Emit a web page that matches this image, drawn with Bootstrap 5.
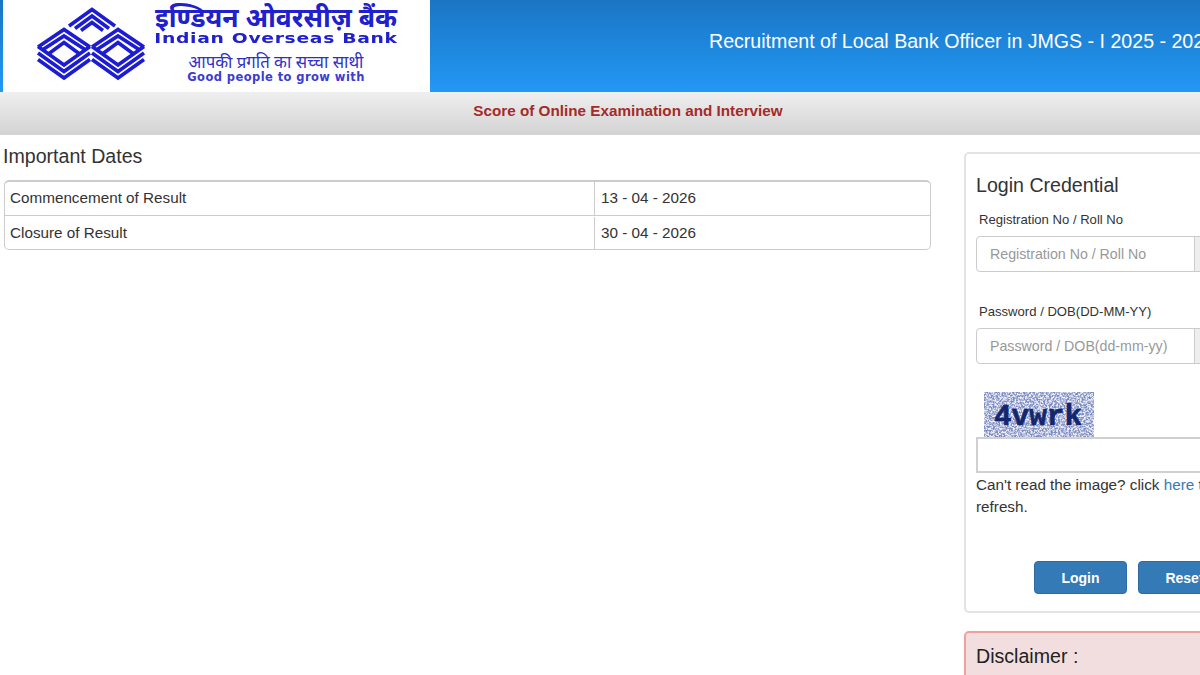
<!DOCTYPE html>
<html lang="en">
<head>
    <meta charset="UTF-8">
    <meta name="viewport" content="width=device-width, initial-scale=1.0">
    <title>Indian Overseas Bank</title>
    <link href="https://cdn.jsdelivr.net/npm/bootstrap@5.3.0/dist/css/bootstrap.min.css" rel="stylesheet">
    <style>
        html, body { height: 675px; overflow: hidden; }
        body { font-family: "Liberation Sans", Arial, sans-serif; font-size: 15.25px; color: #333; background: #fff; }
        .page-wrap { width: 1256px; }

        .top-head { height: 92px; padding-left: 3px; background: linear-gradient(#1b75c4, #2298f5); }
        .logo-box { width: 427px; height: 92px; background: #fff; }
        .logo-text { width: 242px; color: #2020cc; text-align: center; }
        .logo-hi { font-family: "Noto Sans", "Liberation Sans", sans-serif; font-size: 26.5px; font-weight: 700; line-height: 28px; margin-top: 3px; white-space: nowrap; }
        .logo-en { font-family: "DejaVu Sans", sans-serif; font-size: 14px; font-weight: 700; line-height: 14px; letter-spacing: .5px; white-space: nowrap; transform: scaleX(1.34); }
        .logo-tag-hi { font-family: "Noto Sans", "Liberation Sans", sans-serif; font-size: 16.8px; line-height: 18px; margin-top: 8px; color: #3030c8; white-space: nowrap; }
        .logo-tag-en { font-family: "DejaVu Sans", sans-serif; font-size: 11.5px; font-weight: 700; line-height: 12px; letter-spacing: .42px; color: #3c3cd0; white-space: nowrap; }
        .head-title { padding: 0 0 8px 279px; color: #fff; font-size: 19.6px; white-space: nowrap; }

        .sub-head { height: 43px; padding-bottom: 4px; background: linear-gradient(#efefef, #d3d3d3); color: #a52a2a; font-weight: 700; }

        .left-side { width: 964px; padding: 10px 33px 0 3px; }
        .dates-title { font-size: 19.6px; font-weight: 400; line-height: 22px; margin-bottom: 13px; }
        .dates-box { border: 1px solid #ccc; border-top-width: 2px; border-radius: 5px; margin-left: 1px; overflow: hidden; }
        .dates-row { height: 34px; }
        .dates-row:first-child { height: 33px; }
        .dates-row + .dates-row { border-top: 1px solid #ccc; padding-top: 1px; }
        .dates-name { width: 590px; padding-left: 5px; border-right: 1px solid #ccc; }
        .dates-val { padding-left: 6px; }

        .right-side { width: 280px; padding-top: 17px; }
        .login-box { height: 461px; border: 2px solid #e3e3e3; border-radius: 5px; padding: 20px 10px 0; }
        .login-title { font-size: 19.6px; font-weight: 400; line-height: 22px; margin-bottom: 17px; }
        .login-label { font-size: 13.1px; line-height: 14px; margin: 0 0 9px 3px; display: block; }
        .login-group { width: 258px; height: 36px; flex-wrap: nowrap; }
        .login-group + .login-label { margin-top: 33px; }
        .login-group .form-control { flex: 0 0 219px; font-size: 14.2px; padding: 1px 13px 0; border-color: #ccc; border-radius: 4px 0 0 4px; color: #333; }
        .login-group .form-control::placeholder { color: #999; }
        .login-group .input-group-text { background: #eee; border-color: #ccc; flex: 1; }
        .captcha-pic { display: block; margin: 28px 0 0 8px; }
        .captcha-input { display: block; width: 258px; height: 36px; border: 2px solid #d0d0d0; background: #fff; padding: 0 6px; outline: 0; }
        .captcha-note { line-height: 22px; margin: 0; padding-top: 1px; }
        .captcha-note a { color: #337ab7; text-decoration: none; }
        .login-btns { margin: 43px 0 0 58px; gap: 11px; }
        .login-btns .btn { width: 93px; height: 33px; padding: 2px 0 0; font-size: 14px; font-weight: 700; background: #337ab7; border-color: #2e6da4; border-radius: 4px; }
        .disc-box { margin-top: 18px; padding: 12px 10px; background: #f2dede; border: 2px solid #f0a0a0; border-radius: 5px; color: #222; }
        .disc-title { font-size: 19.6px; font-weight: 400; margin: 0; }
    </style>
</head>
<body>
    <div class="page-wrap">
        <!-- bandeau -->
        <header class="top-head d-flex align-items-center">
            <div class="logo-box d-flex flex-shrink-0">
                <svg width="152" height="92" viewBox="0 0 152 92" class="flex-shrink-0" fill="none" stroke="#1c1cd2" stroke-width="3.6">
                    <!-- top module -->
                    <polyline points="66,26 89,9.5 112,26"/>
                    <polyline points="72,28.5 89,16 106,28.5"/>
                    <polyline points="78,30.5 89,22.5 100,30.5"/>
                    <!-- left module -->
                    <g id="mod">
                        <polyline points="35,47 61,29.5 87,47"/>
                        <polyline points="40,49.5 61,36 82,49.5"/>
                        <polyline points="46,53.5 61,42.5 76,53.5"/>
                        <polyline points="35,46.5 61,65 87,46.5"/>
                        <polyline points="35,53 61,71.5 87,53"/>
                        <polyline points="35,59.5 61,78 87,59.5"/>
                    </g>
                    <use href="#mod" x="54"/>
                </svg>
                <div class="logo-text">
                    <div class="logo-hi">इण्डियन ओवरसीज़ बैंक</div>
                    <div class="logo-en">Indian Overseas Bank</div>
                    <div class="logo-tag-hi">आपकी प्रगति का सच्चा साथी</div>
                    <div class="logo-tag-en">Good people to grow with</div>
                </div>
            </div>
            <div class="head-title">Recruitment of Local Bank Officer in JMGS - I 2025 - 2026</div>
        </header>

        <div class="sub-head d-flex align-items-center justify-content-center">Score of Online Examination and Interview</div>

        <div class="d-flex">
            <!-- dates -->
            <main class="left-side">
                <h2 class="dates-title">Important Dates</h2>
                <div class="dates-box">
                    <div class="dates-row d-flex">
                        <div class="dates-name d-flex align-items-center">Commencement of Result</div>
                        <div class="dates-val d-flex align-items-center">13 - 04 - 2026</div>
                    </div>
                    <div class="dates-row d-flex">
                        <div class="dates-name d-flex align-items-center">Closure of Result</div>
                        <div class="dates-val d-flex align-items-center">30 - 04 - 2026</div>
                    </div>
                </div>
            </main>

            <!-- login -->
            <aside class="right-side">
                <form class="card login-box" onsubmit="return false">
                    <h2 class="login-title">Login Credential</h2>
                    <label class="login-label" for="regno">Registration No / Roll No</label>
                    <div class="input-group login-group">
                        <input type="text" class="form-control" id="regno" placeholder="Registration No / Roll No">
                        <span class="input-group-text"></span>
                    </div>
                    <label class="login-label" for="pwd">Password / DOB(DD-MM-YY)</label>
                    <div class="input-group login-group">
                        <input type="text" class="form-control" id="pwd" placeholder="Password / DOB(dd-mm-yy)">
                        <span class="input-group-text"></span>
                    </div>
                    <svg class="captcha-pic" width="110" height="45" viewBox="0 0 110 45">
                        <filter id="grain" x="0" y="0" width="100%" height="100%">
                            <feTurbulence type="fractalNoise" baseFrequency="0.55" numOctaves="3" seed="7"/>
                            <feColorMatrix values="0 0 0 0 .2  0 0 0 0 .26  0 0 0 0 .55  3.4 0 0 0 -1.2"/>
                        </filter>
                        <rect width="110" height="45" fill="#eceef5"/>
                        <rect width="110" height="45" filter="url(#grain)"/>
                        <text x="10" y="33" font-family="Liberation Mono, monospace" font-size="29" font-weight="700" fill="#14266e" stroke="#14266e" stroke-width=".6" textLength="88" lengthAdjust="spacingAndGlyphs">4vwrk</text>
                    </svg>
                    <input type="text" class="captcha-input" aria-label="captcha">
                    <p class="captcha-note">Can't read the image? click <a href="#">here</a> to refresh.</p>
                    <div class="login-btns d-flex">
                        <button type="submit" class="btn btn-primary">Login</button>
                        <button type="reset" class="btn btn-primary">Reset</button>
                    </div>
                </form>
                <div class="disc-box">
                    <h3 class="disc-title">Disclaimer :</h3>
                </div>
            </aside>
        </div>
    </div>
    <script src="https://cdn.jsdelivr.net/npm/bootstrap@5.3.0/dist/js/bootstrap.bundle.min.js"></script>
</body>
</html>
